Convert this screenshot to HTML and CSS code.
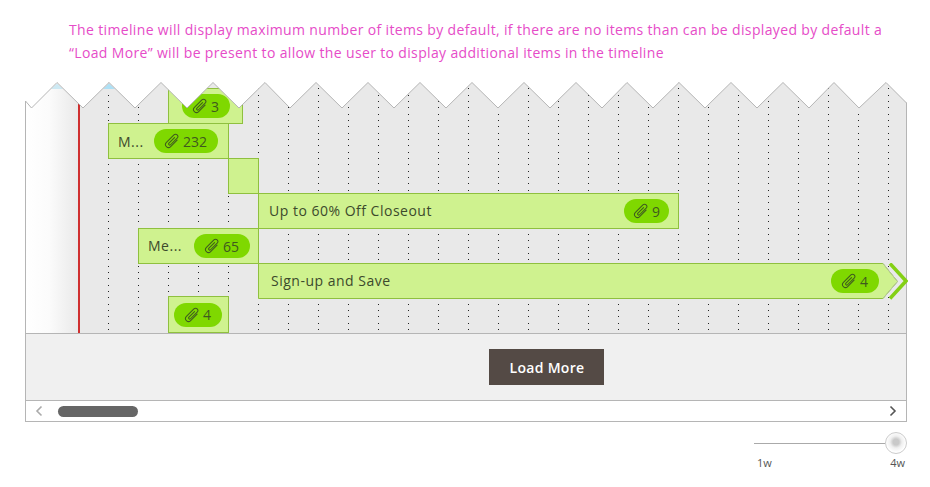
FILE: index.html
```html
<!DOCTYPE html>
<html lang="en">
<head>
<meta charset="utf-8">
<title>Timeline</title>
<link rel="stylesheet" href="styles.css">
</head>
<body>
<svg class="defs" width="0" height="0"><defs>
<symbol id="clip" viewBox="0 0 16 16"><path transform="translate(8 8) rotate(45) translate(-3.5 -8.7)" d="M6.500 4.500V13.600a3 3 0 0 1-6 0V3a2.300 2.300 0 0 1 4.600 0V12.400a1.100 1.100 0 0 1-2.200 0V4.500" fill="none" stroke="currentColor" stroke-width="1" stroke-linecap="round" stroke-linejoin="round"/></symbol>
</defs></svg>
<p class="note">The timeline will display maximum number of items by default, if there are no items than can be displayed by default a “Load More” will be present to allow the user to display additional items in the timeline</p>
<section class="timeline">
  <div class="canvas">
    <div class="fade"></div>
    <div class="today"></div>
    <div class="bar b1"><span class="badge"><svg class="clip"><use href="#clip"/></svg>3</span></div>
    <div class="bar b2"><span class="label">M...</span><span class="badge"><svg class="clip"><use href="#clip"/></svg>232</span></div>
    <div class="bar b3"></div>
    <div class="bar b4"><span class="label raised">Up to 60% Off Closeout</span><span class="badge"><svg class="clip"><use href="#clip"/></svg>9</span></div>
    <div class="bar b5"><span class="label raised">Me...</span><span class="badge"><svg class="clip"><use href="#clip"/></svg>65</span></div>
    <div class="arrow-bar">
      <svg class="arrow-shape" viewBox="0 0 650 37" width="650" height="37"><path d="M0.500 0.500H625L639.500 18.500L625 35.500H0.500Z" fill="#cff28f" stroke="#8fc03f"/><path d="M625 0.500L639.500 18.500L625 35.500" fill="none" stroke="#b9c7a0"/><path d="M632 0.500L648 18L632 35.500" fill="none" stroke="#84d015" stroke-width="3.500"/></svg>
      <span class="label raised">Sign-up and Save</span><span class="badge"><svg class="clip"><use href="#clip"/></svg>4</span>
    </div>
    <div class="bar b7"><span class="badge"><svg class="clip"><use href="#clip"/></svg>4</span></div>
    <svg class="zigzag" viewBox="0 0 882 30" width="882" height="30">
      <path d="M0 0V19L6.500 26L32 0.500L58 26L84 0.500L110 26L136 0.500L162 26L188 0.500L214 26L240 0.500L265 26L291 0.500L317 26L343 0.500L369 26L395 0.500L421 26L447 0.500L473 26L499 0.500L525 26L551 0.500L577 26L602 0.500L628 26L654 0.500L680 26L706 0.500L732 26L758 0.500L784 26L809 0.500L834 26L861 0.500L882 21V0Z" fill="#fff"/>
      <path d="M26 7L32 1.500L38 7Z" fill="#cde9f3"/><path d="M78 7L84 1.500L90 7Z" fill="#aee0f5"/>
      <path d="M0.500 30V19L6.500 26L32 0.500L58 26L84 0.500L110 26L136 0.500L162 26L188 0.500L214 26L240 0.500L265 26L291 0.500L317 26L343 0.500L369 26L395 0.500L421 26L447 0.500L473 26L499 0.500L525 26L551 0.500L577 26L602 0.500L628 26L654 0.500L680 26L706 0.500L732 26L758 0.500L784 26L809 0.500L834 26L861 0.500L881.500 21V30" fill="none" stroke="#b5b5b5"/>
    </svg>
  </div>
  <div class="load-row"><button class="load-btn" type="button">Load More</button></div>
  <div class="scroll">
    <svg class="chev" viewBox="0 0 8 12" width="8" height="12"><path d="M6.500 1.500L2 6L6.500 10.500" fill="none" stroke="#aaa" stroke-width="1.600"/></svg>
    <div class="thumb"></div>
    <svg class="chev chev-right" viewBox="0 0 8 12" width="8" height="12"><path d="M1.500 1.500L6 6L1.500 10.500" fill="none" stroke="#555" stroke-width="1.600"/></svg>
  </div>
</section>
<div class="zoom">
  <div class="track"><span class="line"></span><span class="knob"></span></div>
  <div class="ticks"><span>1w</span><span>4w</span></div>
</div>
</body>
</html>
```
FILE: styles.css
```css
* { box-sizing: border-box; }
html, body { margin: 0; padding: 0; background: #fff; }
body { width: 930px; height: 487px; overflow: hidden; font-family: "Open Sans", sans-serif; }
.defs { position: absolute; }
.note { margin: 0 0 0 69px; padding-top: 18px; width: 830px; height: 82px; font-size: 14px; line-height: 23px; color: #e64cc8; letter-spacing: 0.35px; }
.timeline { margin-left: 25px; width: 882px; }
.canvas { position: relative; height: 251px; border-right: 1px solid #b5b5b5; border-left: 1px solid #b5b5b5; background-color: #e9e9e9; }
.canvas::before { content: ""; position: absolute; left: 82px; top: 0; right: 0; bottom: 0;
  background-image: repeating-linear-gradient(to bottom, #222 0 1px, transparent 1px 6.33px);
  -webkit-mask-image: repeating-linear-gradient(to right, #000 0 1px, transparent 1px 30px);
  mask-image: repeating-linear-gradient(to right, #000 0 1px, transparent 1px 30px); }
.fade { position: absolute; left: 0; top: 0; bottom: 0; width: 52px; background: linear-gradient(to right, #fff 0%, #fbfbfb 45%, #e9e9e9 100%); }
.today { position: absolute; left: 52px; top: 0; bottom: 0; width: 2px; background: #cf2f2f; }
.bar { position: absolute; display: flex; align-items: center; background: #cff28f; border: 1px solid #8fc03f; height: 36px; }
.label { font-size: 14px; color: #3c4a2c; white-space: nowrap; letter-spacing: 0.5px; }
.raised { padding-bottom: 2px; }
.badge { display: inline-flex; align-items: center; gap: 3px; height: 24px; padding: 0 11px 0 10px; border-radius: 12px; background: #7fd800; font-size: 14px; color: #3f5a1f; white-space: nowrap; }
.clip { width: 16px; height: 16px; color: #3f5a1f; }
.b1 { left: 142px; top: 6px; width: 75px; justify-content: flex-end; padding-right: 12px; }
.b2 { left: 82px; top: 41px; width: 121px; padding-left: 9px; justify-content: space-between; padding-right: 10px; }
.b3 { left: 202px; top: 76px; width: 31px; }
.b4 { left: 232px; top: 111px; width: 421px; padding-left: 10px; justify-content: space-between; padding-right: 9px; }
.b4 .badge { padding: 0 9px; }
.b5 { left: 112px; top: 146px; width: 121px; padding-left: 9px; justify-content: space-between; padding-right: 8px; }
.b7 { left: 142px; top: 214px; width: 61px; height: 37px; padding-left: 5px; }
.arrow-bar { position: absolute; left: 232px; top: 181px; width: 628px; height: 36px; display: flex; align-items: center; justify-content: space-between; padding: 0 7px 0 13px; }
.arrow-shape { position: absolute; left: 0; top: 0; }
.arrow-bar .label, .arrow-bar .badge { position: relative; }
.zigzag { position: absolute; left: -1px; top: 0; }
.load-row { height: 68px; display: flex; align-items: center; justify-content: center; padding-left: 160px; background: #f0f0f0; border: 1px solid #b5b5b5; }
.load-btn { width: 115px; height: 36px; border: 0; background: #544a45; color: #fff; font: 600 14px "Open Sans", sans-serif; letter-spacing: 0.3px; padding: 0 0 0 2px; }
.scroll { height: 21px; display: flex; align-items: center; border: 1px solid #b5b5b5; border-top: 0; background: #fff; padding: 0 9px; }
.thumb { width: 80px; height: 11px; border-radius: 6px; background: #666; margin-left: 15px; }
.chev-right { margin-left: auto; }
.zoom { margin: 10px 0 0 754px; width: 153px; }
.track { display: flex; align-items: center; height: 22px; }
.line { flex: 1; height: 1px; background: #aaa; }
.knob { width: 22px; height: 22px; border-radius: 50%; border: 1px solid #ccc; background: radial-gradient(circle at 50% 45%, #c9c9c9 0 3px, #efefef 6px, #fff 10px); }
.ticks { display: flex; justify-content: space-between; margin-top: 1px; padding: 0 2px 0 3px; font-size: 11px; line-height: 15px; color: #555; }
```
